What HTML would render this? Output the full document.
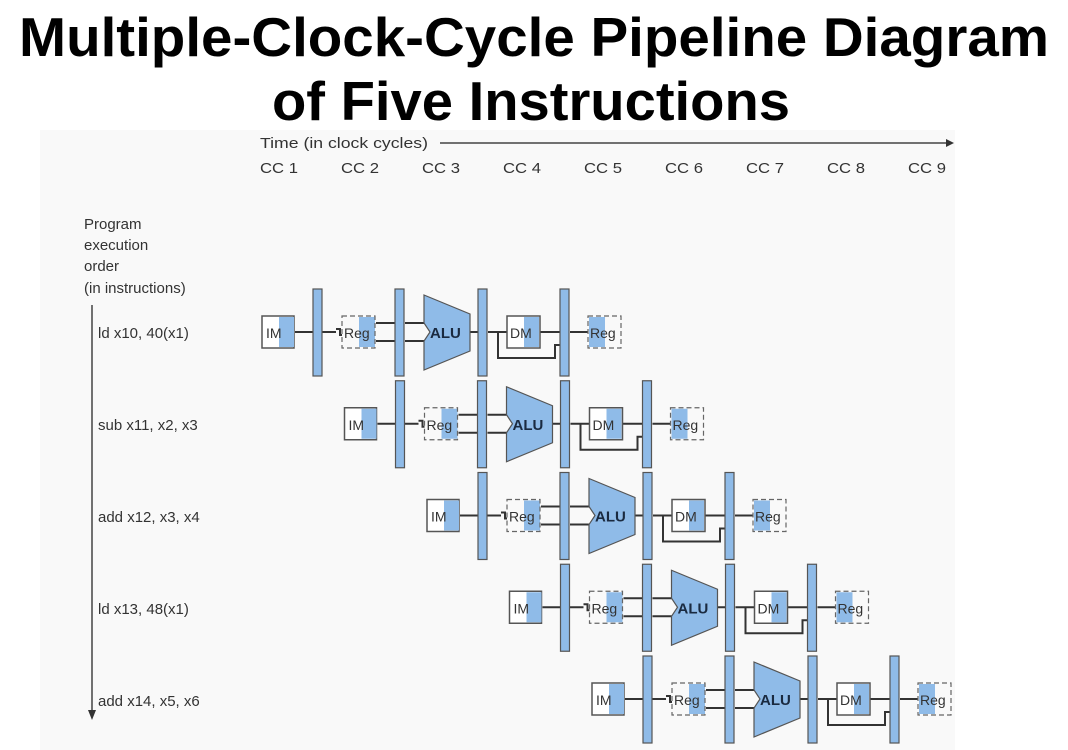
<!DOCTYPE html>
<html><head><meta charset="utf-8"><style>
html,body{margin:0;padding:0;background:#fff;}
svg{display:block;}
text{font-family:"Liberation Sans",sans-serif;}
</style></head><body>
<svg width="1068" height="750" viewBox="0 0 1068 750" xmlns="http://www.w3.org/2000/svg">
<rect x="40" y="130" width="915" height="620" fill="#f9f9f9"/>
<text x="534" y="56" text-anchor="middle" font-size="55" font-weight="bold" fill="#000" textLength="1030" lengthAdjust="spacingAndGlyphs">Multiple-Clock-Cycle Pipeline Diagram</text>
<text x="531" y="120" text-anchor="middle" font-size="55" font-weight="bold" fill="#000" textLength="518" lengthAdjust="spacingAndGlyphs">of Five Instructions</text>
<g fill="#333" font-size="15">
<text x="260" y="148" textLength="168" lengthAdjust="spacingAndGlyphs">Time (in clock cycles)</text>
<text x="260" y="173" textLength="38" lengthAdjust="spacingAndGlyphs">CC 1</text><text x="341" y="173" textLength="38" lengthAdjust="spacingAndGlyphs">CC 2</text><text x="422" y="173" textLength="38" lengthAdjust="spacingAndGlyphs">CC 3</text>
<text x="503" y="173" textLength="38" lengthAdjust="spacingAndGlyphs">CC 4</text><text x="584" y="173" textLength="38" lengthAdjust="spacingAndGlyphs">CC 5</text><text x="665" y="173" textLength="38" lengthAdjust="spacingAndGlyphs">CC 6</text>
<text x="746" y="173" textLength="38" lengthAdjust="spacingAndGlyphs">CC 7</text><text x="827" y="173" textLength="38" lengthAdjust="spacingAndGlyphs">CC 8</text><text x="908" y="173" textLength="38" lengthAdjust="spacingAndGlyphs">CC 9</text>
<text x="84" y="229">Program</text><text x="84" y="250">execution</text><text x="84" y="271">order</text><text x="84" y="293">(in instructions)</text>
<text x="98" y="338">ld x10, 40(x1)</text>
<text x="98" y="430">sub x11, x2, x3</text>
<text x="98" y="522">add x12, x3, x4</text>
<text x="98" y="614">ld x13, 48(x1)</text>
<text x="98" y="706">add x14, x5, x6</text>
</g>
<line x1="440" y1="143" x2="946" y2="143" stroke="#444" stroke-width="1.5"/>
<polygon points="946,139 954,143 946,147" fill="#333"/>
<line x1="92" y1="305" x2="92" y2="712" stroke="#444" stroke-width="1.5"/>
<polygon points="88,710 92,720 96,710" fill="#333"/>
<defs>
<g id="row">
<g stroke="#333" stroke-width="2" fill="none">
<line x1="295" y1="332" x2="313" y2="332"/>
<line x1="322" y1="332" x2="336" y2="332"/>
<polyline points="336,329 340,329 340,335 342,335"/>
<line x1="376" y1="323" x2="395" y2="323"/><line x1="376" y1="341" x2="395" y2="341"/>
<line x1="405" y1="323" x2="424" y2="323"/><line x1="405" y1="341" x2="424" y2="341"/>
<line x1="470" y1="332" x2="478" y2="332"/>
<line x1="488" y1="332" x2="507" y2="332"/>
<polyline points="498,332 498,358 555,358 555,345 560,345"/>
<line x1="540" y1="332" x2="560" y2="332"/>
<line x1="570" y1="332" x2="588" y2="332"/>
</g>
<rect x="262" y="316" width="32" height="32" fill="#fff" stroke="#555" stroke-width="1.5"/>
<rect x="279" y="317" width="15" height="30" fill="#8fbbe8"/>
<rect x="313" y="289" width="9" height="87" fill="#8fbbe8" stroke="#555" stroke-width="1.2"/>
<rect x="359" y="317" width="16" height="30" fill="#8fbbe8"/>
<rect x="342" y="316" width="33" height="32" fill="none" stroke="#666" stroke-width="1.2" stroke-dasharray="5,3"/>
<rect x="395" y="289" width="9" height="87" fill="#8fbbe8" stroke="#555" stroke-width="1.2"/>
<polygon points="424,295 470,314 470,351 424,370 424,341 430,332 424,323" fill="#8fbbe8" stroke="#555" stroke-width="1.2"/>
<rect x="478" y="289" width="9" height="87" fill="#8fbbe8" stroke="#555" stroke-width="1.2"/>
<rect x="507" y="316" width="33" height="32" fill="#fff" stroke="#555" stroke-width="1.5"/>
<rect x="524" y="317" width="15" height="30" fill="#8fbbe8"/>
<rect x="560" y="289" width="9" height="87" fill="#8fbbe8" stroke="#555" stroke-width="1.2"/>
<rect x="589" y="317" width="16" height="30" fill="#8fbbe8"/>
<rect x="588" y="316" width="33" height="32" fill="none" stroke="#666" stroke-width="1.2" stroke-dasharray="5,3"/>
<g fill="#333" font-size="14">
<text x="266" y="338">IM</text><text x="344" y="338">Reg</text>
<text x="430" y="338" font-weight="bold" font-size="15" fill="#1a2a40">ALU</text>
<text x="510" y="338">DM</text><text x="590" y="338">Reg</text>
</g>
</g>
</defs>
<use href="#row"/>
<use href="#row" transform="translate(82.5,91.75)"/>
<use href="#row" transform="translate(165,183.5)"/>
<use href="#row" transform="translate(247.5,275.25)"/>
<use href="#row" transform="translate(330,367)"/>
</svg>
</body></html>
